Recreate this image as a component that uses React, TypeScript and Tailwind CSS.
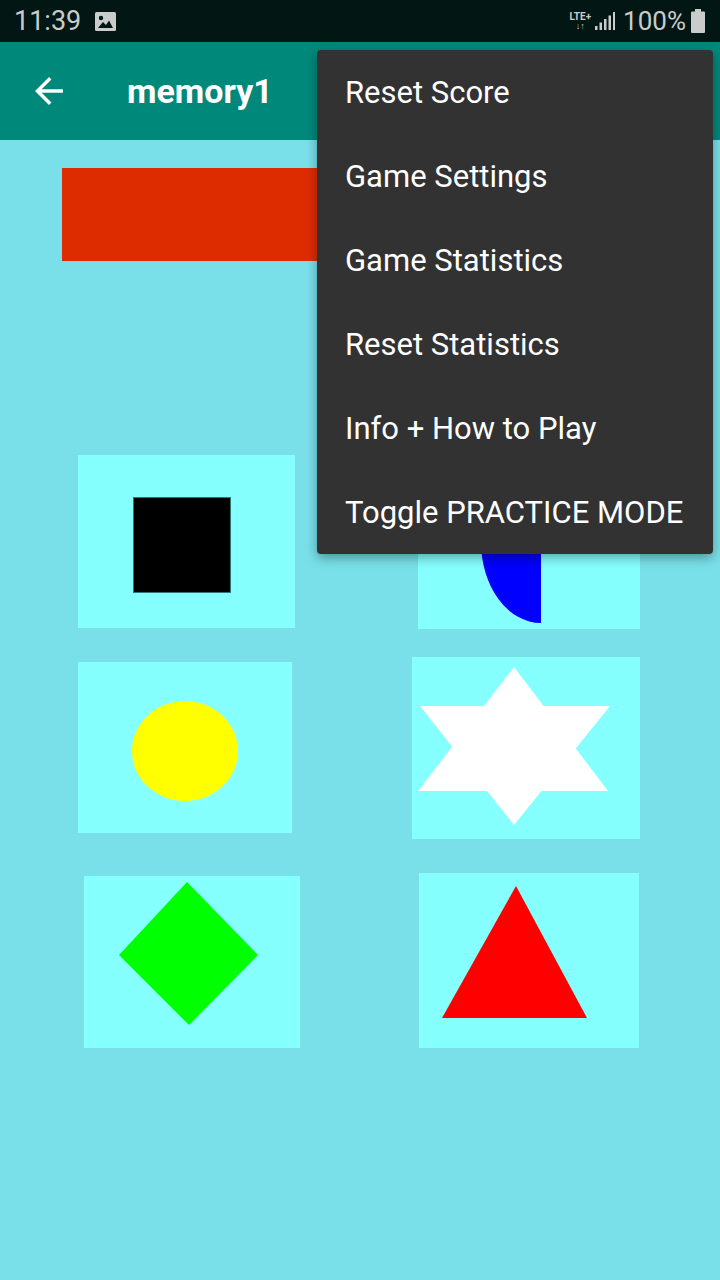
import type { ReactNode } from "react";

const MENU_ITEMS = [
  "Reset Score",
  "Game Settings",
  "Game Statistics",
  "Reset Statistics",
  "Info + How to Play",
  "Toggle PRACTICE MODE",
];

function Tile({
  w,
  h,
  className,
  children,
}: {
  w: number;
  h: number;
  className: string;
  children: ReactNode;
}) {
  return (
    <div className={`shrink-0 bg-[#86ffff] ${className}`}>
      <svg width={w} height={h} viewBox={`0 0 ${w} ${h}`} className="block">
        {children}
      </svg>
    </div>
  );
}

function StatusBar() {
  return (
    <div className="flex h-[42px] items-center bg-[#021614] pl-[14px] pr-[15px] text-[#c9cccb]">
      <span className="text-[27px] leading-none">11:39</span>
      {/* gallery notification icon */}
      <svg width="21" height="19" viewBox="0 0 21 19" className="ml-[14px]">
        <rect x="0" y="0" width="21" height="19" rx="1.5" fill="#c9cccb" />
        <circle cx="6" cy="6" r="2.2" fill="#021614" />
        <path d="M3 16 L8 10 L11 13 L14 8.5 L18 16 Z" fill="#021614" />
      </svg>
      <div className="flex-1" />
      <div className="mr-[4px] flex flex-col items-center leading-none">
        <span className="text-[10px] font-bold">LTE+</span>
        <span className="text-[9px] font-bold">↓↑</span>
      </div>
      <svg width="20" height="18" viewBox="0 0 20 18" className="mr-[8px]">
        <rect x="0" y="14" width="2.5" height="4" fill="#c9cccb" />
        <rect x="4.5" y="10.5" width="2.5" height="7.5" fill="#c9cccb" />
        <rect x="9" y="7" width="2.5" height="11" fill="#c9cccb" />
        <rect x="13.5" y="3.5" width="2.5" height="14.5" fill="#c9cccb" />
        <rect x="18" y="0" width="2" height="18" fill="#c9cccb" />
      </svg>
      <span className="text-[26px] leading-none">100%</span>
      <svg width="14" height="24" viewBox="0 0 14 24" className="ml-[5px]">
        <rect x="4" y="0" width="6" height="3" fill="#c9cccb" />
        <rect x="0" y="2.5" width="14" height="21.5" rx="1" fill="#c9cccb" />
      </svg>
    </div>
  );
}

export default function App() {
  return (
    <div
      className="relative flex h-[1280px] w-[720px] flex-col overflow-hidden bg-[#79e0ea]"
      style={{ fontFamily: "Roboto, 'Noto Sans', sans-serif" }}
    >
      <StatusBar />

      {/* Toolbar */}
      <div className="flex h-[98px] items-center bg-[#00897b] text-white">
        <svg width="42" height="42" viewBox="0 0 24 24" className="ml-[28px]">
          <path
            d="M20 11H7.83l5.59-5.59L12 4l-8 8 8 8 1.41-1.41L7.83 13H20v-2z"
            fill="white"
          />
        </svg>
        <span className="ml-[57px] text-[34px] font-bold leading-none">memory1</span>
      </div>

      {/* Board */}
      <div className="flex flex-1 flex-col pt-[28px]">
        <div className="ml-[62px] h-[93px] w-[596px] bg-[#dd2c00]" />

        <div className="mt-[194px] flex items-start">
          <Tile w={217} h={173} className="ml-[78px]">
            <rect x="55.5" y="42.5" width="97" height="95" fill="#000" stroke="#2f7676" strokeWidth="1" />
          </Tile>
          <Tile w={222} h={174} className="ml-[123px]">
            <path d="M123 6 A60 81 0 0 0 123 168 Z" fill="#0000ff" />
          </Tile>
        </div>

        <div className="mt-[28px] flex items-start">
          <Tile w={214} h={171} className="ml-[78px] mt-[5px]">
            <ellipse cx="107" cy="89" rx="53" ry="50" fill="#ffff00" />
          </Tile>
          <Tile w={228} h={182} className="ml-[120px]">
            <polygon points="102,10 6,134 196,134" fill="#fff" />
            <polygon points="102,168 8,49 198,49" fill="#fff" />
          </Tile>
        </div>

        <div className="mt-[34px] flex items-start">
          <Tile w={216} h={172} className="ml-[84px] mt-[3px]">
            <polygon points="103,6 35,79 105,149 174,79" fill="#00ff00" />
          </Tile>
          <Tile w={220} h={175} className="ml-[119px]">
            <polygon points="97,13 23,145 168,145" fill="#ff0000" />
          </Tile>
        </div>
      </div>

      {/* Overflow menu */}
      <div className="absolute left-[317px] top-[50px] w-[396px] rounded-[4px] bg-[#323232] shadow-[0_4px_12px_rgba(0,0,0,0.35)]">
        {MENU_ITEMS.map((item) => (
          <div key={item} className="flex h-[84px] items-center pl-[28px] text-[31px] leading-none text-white">
            {item}
          </div>
        ))}
      </div>
    </div>
  );
}
